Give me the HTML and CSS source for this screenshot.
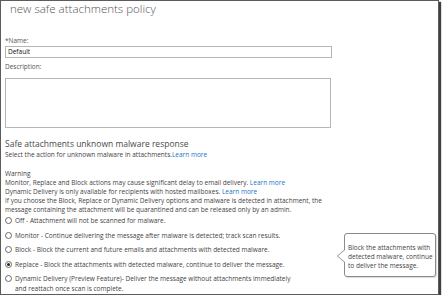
FILE: index.html
```html
<!DOCTYPE html>
<html lang="en">
<head>
<meta charset="utf-8">
<title>new safe attachments policy</title>
<link rel="stylesheet" href="styles.css">
</head>
<body>
<div class="window">
  <h1 class="title">new safe attachments policy</h1>
  <div class="form">
    <div class="label">*Name:</div>
    <div class="input">Default</div>
    <div class="label label-desc">Description:</div>
    <div class="textarea"></div>
    <h2 class="section">Safe attachments unknown malware response</h2>
    <p class="text select">Select the action for unknown malware in attachments.<a class="link">Learn more</a></p>
    <div class="warning">
      <p class="text">Warning</p>
      <p class="text">Monitor, Replace and Block actions may cause significant delay to email delivery. <a class="link">Learn more</a></p>
      <p class="text">Dynamic Delivery is only available for recipients with hosted mailboxes. <a class="link">Learn more</a></p>
      <p class="text">If you choose the Block, Replace or Dynamic Delivery options and malware is detected in attachment, the<br>message containing the attachment will be quarantined and can be released only by an admin.</p>
    </div>
    <ul class="options">
      <li class="option"><span class="radio"></span><span class="text">Off - Attachment will not be scanned for malware.</span></li>
      <li class="option"><span class="radio"></span><span class="text">Monitor - Continue delivering the message after malware is detected; track scan results.</span></li>
      <li class="option"><span class="radio"></span><span class="text">Block - Block the current and future emails and attachments with detected malware.</span></li>
      <li class="option"><span class="radio checked"></span><span class="text">Replace - Block the attachments with detected malware, continue to deliver the message.</span></li>
      <li class="option"><span class="radio"></span><span class="text">Dynamic Delivery (Preview Feature)- Deliver the message without attachments immediately<br>and reattach once scan is complete.</span></li>
    </ul>
  </div>
  <div class="tooltip">
    <span class="arrow"></span>
    <p class="text">Block the attachments with<br>detected malware, continue<br>to deliver the message.</p>
  </div>
</div>
</body>
</html>
```
FILE: styles.css
```css
html, body {
  margin: 0;
  padding: 0;
  background: #ffffff;
}
body {
  font-family: "Open Sans", "Noto Sans", sans-serif;
  color: #3f3f3f;
}
.window {
  position: relative;
  box-sizing: border-box;
  width: 439px;
  height: 295px;
  border: 1px solid #5c5c5c;
  box-shadow: 2px 2px 1px rgba(0, 0, 0, 0.75);
  padding: 1px 0 0 4px;
  overflow: hidden;
}
.title {
  margin: 0 0 0 5px;
  font-size: 11.5px;
  font-weight: 300;
  line-height: 14px;
  color: #555;
}
.form {
  display: flex;
  flex-direction: column;
  align-items: flex-start;
}
.label {
  margin-top: 20px;
  font-size: 6.5px;
  line-height: 9px;
  color: #555;
}
.label-desc {
  margin-top: 4px;
}
.input {
  box-sizing: border-box;
  margin-top: 1px;
  width: 327px;
  height: 12px;
  border: 1px solid #b5b5b5;
  padding: 0 2px;
  font-size: 6.5px;
  line-height: 10px;
  color: #111;
}
.textarea {
  box-sizing: border-box;
  margin-top: 7px;
  width: 326px;
  height: 50px;
  border: 1px solid #b5b5b5;
}
.section {
  margin: 10px 0 0 0;
  font-size: 8.5px;
  font-weight: 400;
  line-height: 11px;
  color: #4a4a4a;
}
.text {
  margin: 0;
  font-size: 6.5px;
  line-height: 9px;
}
.select {
  margin-top: 1px;
}
.link {
  color: #1a73c8;
}
.warning {
  margin-top: 10px;
}
.options {
  list-style: none;
  margin: 2px 0 0 0;
  padding: 0;
  display: flex;
  flex-direction: column;
  gap: 5.5px;
}
.option {
  display: flex;
  align-items: flex-start;
  gap: 3px;
}
.option .text {
  line-height: 9.5px;
}
.option:last-child .text {
  line-height: 10px;
}
.option:not(:last-child) {
  height: 9px;
}
.radio {
  box-sizing: border-box;
  flex: none;
  width: 7px;
  height: 7px;
  margin-top: 1px;
  border: 1px solid #6a6a6a;
  border-radius: 50%;
  display: flex;
  align-items: center;
  justify-content: center;
}
.radio.checked::after {
  content: "";
  width: 3px;
  height: 3px;
  border-radius: 50%;
  background: #222;
}
.tooltip {
  position: absolute;
  left: 343px;
  top: 232px;
  box-sizing: border-box;
  width: 92px;
  height: 44px;
  border: 1px solid #8a8a8a;
  border-radius: 3px;
  background: #fff;
  padding: 9px 0 0 3px;
  box-shadow: 1px 1px 1px rgba(0, 0, 0, 0.15);
}
.tooltip .text {
  line-height: 9px;
}
.arrow {
  position: absolute;
  left: -8px;
  top: 15px;
  width: 0;
  height: 0;
  border-top: 7px solid transparent;
  border-bottom: 7px solid transparent;
  border-right: 8px solid #8a8a8a;
}
.arrow::after {
  content: "";
  position: absolute;
  left: 1px;
  top: -6px;
  width: 0;
  height: 0;
  border-top: 6px solid transparent;
  border-bottom: 6px solid transparent;
  border-right: 7px solid #fff;
}
```
